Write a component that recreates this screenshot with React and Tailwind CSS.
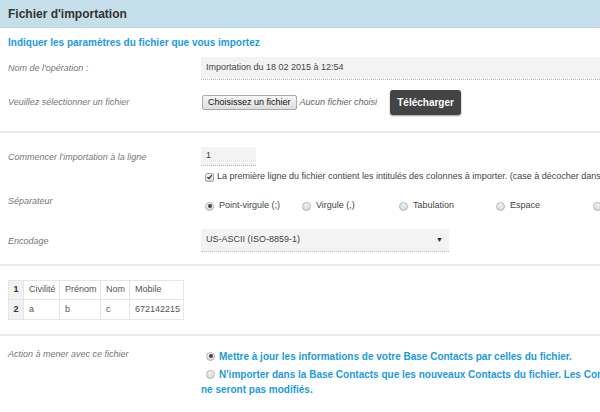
import React from 'react';

const FONT = { fontFamily: '"Liberation Sans", Arial, sans-serif' };

function Radio({ checked }) {
  return (
    <span className="inline-flex h-[9px] w-[9px] shrink-0 items-center justify-center rounded-full border border-[#b4b4b4] bg-gradient-to-b from-[#f4f4f4] to-[#d9d9d9] align-middle">
      {checked && <span className="h-[4px] w-[4px] rounded-full bg-[#444]" />}
    </span>
  );
}

function Checkbox() {
  return (
    <span className="inline-flex h-[9px] w-[9px] shrink-0 items-center justify-center rounded-[2px] border border-[#a8a8a8] bg-gradient-to-b from-[#f4f4f4] to-[#d9d9d9]">
      <svg viewBox="0 0 10 10" className="h-[8px] w-[8px]">
        <path d="M2 5.2 L4.2 7.4 L8.2 2.4" fill="none" stroke="#333" strokeWidth="1.8" />
      </svg>
    </span>
  );
}

function Label({ children, className = '' }) {
  return (
    <div className={`w-[201px] shrink-0 pl-2 text-[9px] italic text-[#777] ${className}`}>{children}</div>
  );
}

const SEPARATORS = [
  { label: 'Point-virgule (;)', checked: true },
  { label: 'Virgule (,)' },
  { label: 'Tabulation' },
  { label: 'Espace' },
  { label: 'Autre' },
];

export default function App() {
  return (
    <div className="h-[412px] w-full overflow-hidden bg-white" style={FONT}>
      <div className="w-[800px]">
        {/* header */}
        <div className="flex h-[28px] items-center border-b border-[#b9d6e2] bg-[#c5dfea] px-2">
          <h1 className="text-[12px] font-bold text-[#333]">Fichier d'importation</h1>
        </div>

        <div className="pl-2 pt-[9px] text-[10px] font-bold leading-[12px] text-[#1c9ae0]">
          Indiquer les paramètres du fichier que vous importez
        </div>

        {/* nom */}
        <div className="mt-[8px] flex h-[23px] items-center">
          <Label>Nom de l'opération :</Label>
          <div className="flex h-full flex-1 items-center border-b border-dotted border-[#bbb] bg-[#f3f3f3] pl-[5px] text-[9px] text-[#444]">
            Importation du 18 02 2015 à 12:54
          </div>
        </div>

        {/* fichier */}
        <div className="mt-[10px] flex h-[25px] items-center">
          <Label>Veuillez sélectionner un fichier</Label>
          <div className="flex items-center">
            <button className="ml-[1px] h-[15px] rounded-[2px] border border-[#a9a9a9] bg-gradient-to-b from-[#f6f6f6] to-[#dedede] px-[5px] text-[9px] leading-[13px] text-[#111]">
              Choisissez un fichier
            </button>
            <span className="ml-[3px] text-[9px] italic text-[#666]">Aucun fichier choisi</span>
            <button className="ml-[13px] h-[25px] w-[71px] rounded-[3px] bg-[#444] text-[10px] font-bold text-white shadow-[0_1px_2px_rgba(0,0,0,0.4)]">
              Télécharger
            </button>
          </div>
        </div>

        <div className="mt-[16px] h-[2px] bg-[#ebebeb]" />

        {/* ligne */}
        <div className="mt-[14px] flex h-[19px] items-center">
          <Label className="pt-[3px]">Commencer l'importation à la ligne</Label>
          <div className="flex h-full w-[55px] items-center border-b border-dotted border-[#bbb] bg-[#f3f3f3] pl-[5px] text-[9px] text-[#444]">
            1
          </div>
        </div>
        <div className="mt-[4px] flex h-[14px] items-center pl-[205px]">
          <Checkbox />
          <span className="ml-[3px] whitespace-nowrap text-[9px] text-[#444]">
            La première ligne du fichier contient les intitulés des colonnes à importer. (case à décocher dans le cas contraire)
          </span>
        </div>

        {/* separateur */}
        <div className="mt-[12px] flex items-start">
          <Label className="leading-[11px]">Séparateur</Label>
          <div className="mt-[4px] flex h-[12px] items-center pl-[4px]">
            {SEPARATORS.map((s) => (
              <div key={s.label} className="flex w-[97px] shrink-0 items-center">
                <Radio checked={s.checked} />
                <span className="ml-[5px] text-[9px] text-[#444]">{s.label}</span>
              </div>
            ))}
          </div>
        </div>

        {/* encodage */}
        <div className="mt-[17px] flex h-[23px] items-center">
          <Label className="pt-[2px]">Encodage</Label>
          <div className="flex h-full w-[248px] items-center justify-between border-b border-dotted border-[#bbb] bg-[#f3f3f3] pl-[5px] pr-[6px] text-[9px] text-[#444]">
            <span>US-ASCII (ISO-8859-1)</span>
            <span className="text-[7px] text-[#222]">▼</span>
          </div>
        </div>

        <div className="mt-[12px] h-[2px] bg-[#ebebeb]" />

        {/* apercu */}
        <div className="mt-[14px] pl-2">
          <table className="border-collapse text-[9px] text-[#555]">
            <tbody>
              <tr className="h-[19px]">
                <td className="w-[15px] border border-[#e6e6e6] bg-[#f2f2f2] text-center font-bold text-[#333]">1</td>
                <td className="w-[36px] border border-[#e6e6e6] pl-[5px]">Civilité</td>
                <td className="w-[41px] border border-[#e6e6e6] pl-[5px]">Prénom</td>
                <td className="w-[29px] border border-[#e6e6e6] pl-[5px]">Nom</td>
                <td className="w-[54px] border border-[#e6e6e6] pl-[5px]">Mobile</td>
              </tr>
              <tr className="h-[20px]">
                <td className="border border-[#e6e6e6] bg-[#f2f2f2] text-center font-bold text-[#333]">2</td>
                <td className="border border-[#e6e6e6] pl-[5px]">a</td>
                <td className="border border-[#e6e6e6] pl-[5px]">b</td>
                <td className="border border-[#e6e6e6] pl-[5px]">c</td>
                <td className="border border-[#e6e6e6] pl-[5px]">672142215</td>
              </tr>
            </tbody>
          </table>
        </div>

        <div className="mt-[14px] h-[2px] bg-[#ebebeb]" />

        {/* action */}
        <div className="mt-[14px] flex items-start">
          <Label className="-mt-[2px] leading-[12px]">Action à mener avec ce fichier</Label>
          <div className="flex-1 text-[10px] font-bold text-[#1c9ae0]">
            <div className="flex h-[12px] items-center pl-[5px]">
              <Radio checked />
              <span className="ml-[4px] whitespace-nowrap">
                Mettre à jour les informations de votre Base Contacts par celles du fichier.
              </span>
            </div>
            <p className="mt-[5px] leading-[15px]">
              <span className="ml-[5px] mr-[4px] inline-flex align-[-1px]">
                <Radio />
              </span>
              <span className="whitespace-nowrap">
                N'importer dans la Base Contacts que les nouveaux Contacts du fichier. Les Contacts existants
              </span>
              <br />
              ne seront pas modifiés.
            </p>
          </div>
        </div>
      </div>
    </div>
  );
}
